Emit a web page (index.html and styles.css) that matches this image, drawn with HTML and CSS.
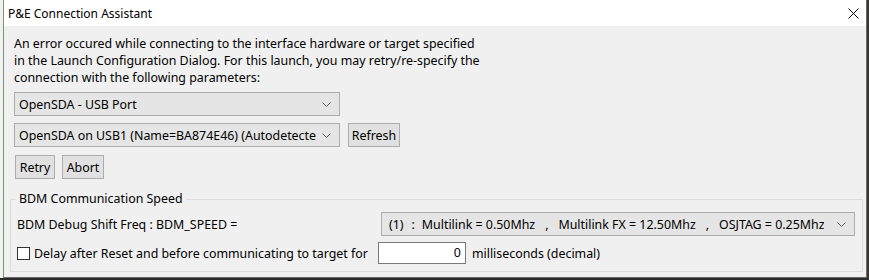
FILE: index.html
```html
<!DOCTYPE html>
<html>
<head>
<meta charset="utf-8">
<link rel="stylesheet" href="styles.css">
</head>
<body>
<div class="screen">
  <div class="strip-left"></div>
  <div class="window">
    <div class="titlebar">
      <span class="title">P&amp;E Connection Assistant</span>
      <svg class="close" width="11" height="11" viewBox="0 0 11 11"><path d="M0.5 0.5L10.5 10.5M10.5 0.5L0.5 10.5" stroke="#000" stroke-width="1" fill="none"/></svg>
    </div>
    <div class="body">
      <p class="msg">An error occured while connecting to the interface hardware or target specified<br>in the Launch Configuration Dialog. For this launch, you may retry/re-specify the<br>connection with the following parameters:</p>
      <div class="combo c1"><span>OpenSDA - USB Port</span><svg class="chev" width="9" height="5" viewBox="0 0 9 5"><path d="M0.5 0.5L4.5 4.5L8.5 0.5" stroke="#606060" fill="none"/></svg></div>
      <div class="row r2">
        <div class="combo c2"><span>OpenSDA on USB1 (Name=BA874E46) (Autodetecte</span><svg class="chev" width="9" height="5" viewBox="0 0 9 5"><path d="M0.5 0.5L4.5 4.5L8.5 0.5" stroke="#606060" fill="none"/></svg></div>
        <div class="btn refresh">Refresh</div>
      </div>
      <div class="row r3">
        <div class="btn retry">Retry</div>
        <div class="btn abort">Abort</div>
      </div>
      <div class="group">
        <div class="legend">BDM Communication Speed</div>
        <div class="grow g1">
          <span class="lbl">BDM Debug Shift Freq : BDM_SPEED =</span>
          <div class="combo speed"><span class="opt"><span>(1)</span><span class="sep">:</span><span>Multilink = 0.50Mhz</span><span class="sep sep2">,</span><span>Multilink FX = 12.50Mhz</span><span class="sep sep2">,</span><span>OSJTAG = 0.25Mhz</span></span><svg class="chev" width="9" height="5" viewBox="0 0 9 5"><path d="M0.5 0.5L4.5 4.5L8.5 0.5" stroke="#606060" fill="none"/></svg></div>
        </div>
        <div class="grow g2">
          <span class="check"></span>
          <span class="lbl2">Delay after Reset and before communicating to target for</span>
          <div class="input">0</div>
          <span class="unit">milliseconds (decimal)</span>
        </div>
      </div>
    </div>
  </div>
  <div class="strip-right"></div>
</div>
</body>
</html>
```
FILE: styles.css
```css
html, body {
  margin: 0;
  padding: 0;
}
body {
  width: 869px;
  height: 280px;
  overflow: hidden;
  background: #2b2b2b;
  font-family: "Noto Sans", "Liberation Sans", sans-serif;
  font-size: 12.4px;
  color: #000;
}
.screen {
  display: flex;
  height: 278px;
}
.strip-left {
  width: 3px;
  background: #eef3ee;
}
.strip-right {
  width: 2px;
  background: #3a3630;
}
.window {
  width: 862px;
  border-left: 1px solid #8a8a8a;
  border-right: 1px solid #6a6a6a;
  border-bottom: 1px solid #6a6a6a;
  background: #f0f0f0;
  display: flex;
  flex-direction: column;
}
.titlebar {
  height: 26px;
  background: #fff;
  display: flex;
  align-items: center;
  justify-content: space-between;
  padding: 0 7px 0 4px;
}
.title {
  font-size: 12px;
  line-height: 16px;
  padding-top: 1px;
}
.close {
  display: block;
}
.body {
  padding: 9px 0 0 10px;
  display: flex;
  flex-direction: column;
}
.msg {
  margin: 0;
  line-height: 17px;
}
.combo {
  box-sizing: border-box;
  height: 24px;
  background: #e5e5e5;
  border: 1px solid #adadad;
  display: flex;
  align-items: center;
  justify-content: space-between;
  padding: 0 8px 0 4px;
  white-space: nowrap;
  overflow: hidden;
}
.combo > span {
  overflow: hidden;
}
.chev {
  flex: none;
  display: block;
}
.c1 {
  width: 326px;
  margin-top: 6px;
}
.row {
  display: flex;
}
.r2 {
  margin-top: 7px;
  gap: 8px;
}
.c2 {
  width: 326px;
}
.btn {
  box-sizing: border-box;
  height: 24px;
  background: #e1e1e1;
  border: 1px solid #adadad;
  display: flex;
  align-items: center;
  justify-content: center;
}
.refresh {
  width: 52px;
}
.r3 {
  margin-top: 8px;
  gap: 7px;
  padding-left: 1px;
}
.retry {
  width: 40px;
}
.abort {
  width: 42px;
}
.group {
  margin-top: 20px;
  margin-left: -4px;
  width: 853px;
  height: 73px;
  box-sizing: border-box;
  border: 1px solid #dcdcdc;
  position: relative;
  padding: 12px 0 0 6px;
}
.legend {
  position: absolute;
  top: -9px;
  left: 5px;
  padding: 0 3px;
  background: #f0f0f0;
  line-height: 16px;
}
.grow {
  display: flex;
  align-items: center;
}
.g1 {
  justify-content: space-between;
  padding-right: 7px;
}
.speed {
  width: 474px;
  padding-left: 7px;
}
.opt {
  display: flex;
}
.sep {
  padding: 0 7px 0 8px;
}
.sep2 {
  padding: 0 10px 0 10px;
}
.g2 {
  margin-top: 6px;
}
.check {
  width: 13px;
  height: 13px;
  box-sizing: border-box;
  border: 1px solid #333;
  background: #fff;
  margin-right: 4px;
}
.input {
  box-sizing: border-box;
  width: 88px;
  height: 22px;
  margin-left: 10px;
  background: #fff;
  border: 1px solid #7a7a7a;
  text-align: right;
  padding-right: 4px;
  line-height: 20px;
}
.unit {
  margin-left: 6px;
}
```
